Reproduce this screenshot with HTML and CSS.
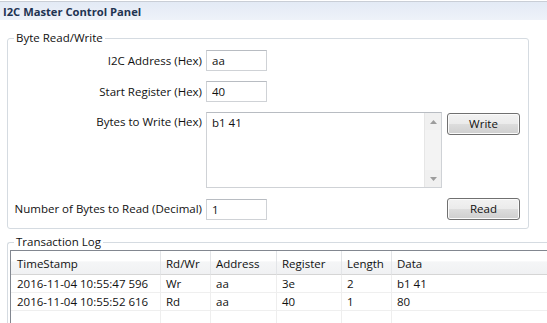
FILE: index.html
```html
<!DOCTYPE html>
<html>
<head>
<meta charset="utf-8">
<link rel="stylesheet" href="styles.css">
</head>
<body>
<div class="titlebar">I2C Master Control Panel</div>

<fieldset class="group rw">
  <legend>Byte Read/Write</legend>
  <div class="form">
    <label class="lbl">I2C Address (Hex)</label>
    <div class="field"><input class="input" type="text" value="aa"></div>
    <div></div>

    <label class="lbl">Start Register (Hex)</label>
    <div class="field"><input class="input" type="text" value="40"></div>
    <div></div>

    <label class="lbl lbl-top">Bytes to Write (Hex)</label>
    <div class="field">
      <div class="textbox">
        <div class="textbox-text">b1 41</div>
        <div class="vscroll">
          <div class="vbtn"><svg width="7" height="4" viewBox="0 0 7 4"><path d="M0 4 L3.5 0 L7 4 Z" fill="#9c9c9c"/></svg></div>
          <div class="vtrack"></div>
          <div class="vbtn"><svg width="7" height="4" viewBox="0 0 7 4"><path d="M0 0 L3.5 4 L7 0 Z" fill="#9c9c9c"/></svg></div>
        </div>
      </div>
    </div>
    <button class="btn btn-top">Write</button>

    <label class="lbl">Number of Bytes to Read (Decimal)</label>
    <div class="field"><input class="input" type="text" value="1"></div>
    <button class="btn">Read</button>
  </div>
</fieldset>

<fieldset class="group log">
  <legend>Transaction Log</legend>
  <table class="grid">
    <colgroup>
      <col class="c1"><col class="c2"><col class="c3"><col class="c4"><col class="c5"><col class="c6">
    </colgroup>
    <thead>
      <tr><th>TimeStamp</th><th>Rd/Wr</th><th>Address</th><th>Register</th><th>Length</th><th>Data</th></tr>
    </thead>
    <tbody>
      <tr><td>2016-11-04 10:55:47 596</td><td>Wr</td><td>aa</td><td>3e</td><td>2</td><td>b1 41</td></tr>
      <tr><td>2016-11-04 10:55:52 616</td><td>Rd</td><td>aa</td><td>40</td><td>1</td><td>80</td></tr>
      <tr><td></td><td></td><td></td><td></td><td></td><td></td></tr>
    </tbody>
  </table>
</fieldset>
</body>
</html>
```
FILE: styles.css
```css
html, body {
  margin: 0;
  padding: 0;
}
body {
  width: 547px;
  height: 323px;
  overflow: hidden;
  background: #ffffff;
  font-family: "Open Sans", "Noto Sans", sans-serif;
  font-size: 11.5px;
  color: #111111;
}

.titlebar {
  margin-top: 1px;
  border-top: 1px solid #c9ced6;
  height: 18px;
  line-height: 19px;
  padding-left: 3px;
  background: linear-gradient(to bottom, #e3eaf5 0%, #eef2f9 100%);
  font-weight: bold;
  font-size: 11.2px;
  color: #1f3452;
}

.group {
  margin: 0 0 0 7px;
  padding: 0;
  border: 1px solid #d5dbe1;
  border-radius: 3px;
  min-width: 0;
  box-sizing: border-box;
}
.group legend {
  margin-left: 6px;
  padding: 0 2px;
  line-height: 16px;
  color: #111111;
}

.rw {
  margin-top: 10px;
  width: 522px;
}

.form {
  display: grid;
  grid-template-columns: 198px 241px 73px;
  row-gap: 10px;
  align-items: center;
  padding: 4px 0 8px;
}

.lbl {
  text-align: right;
  padding-right: 4px;
  line-height: 16px;
  white-space: nowrap;
}
.lbl-top {
  align-self: start;
  padding-top: 2px;
}

.field {
  display: flex;
}

.input {
  box-sizing: border-box;
  width: 61px;
  height: 21px;
  margin: 0;
  padding: 0 5px;
  border: 1px solid #cfd2d6;
  border-top-color: #b8bcc2;
  font-family: inherit;
  font-size: 11.5px;
  color: #111111;
  background: #fff;
  outline: none;
}

.textbox {
  box-sizing: border-box;
  width: 236px;
  height: 76px;
  border: 1px solid #cfd2d6;
  border-top-color: #b8bcc2;
  display: flex;
}
.textbox-text {
  flex: 1;
  padding: 2px 5px 0;
  line-height: 16px;
}
.vscroll {
  width: 17px;
  display: flex;
  flex-direction: column;
  background: #f0f0f0;
  border-left: 1px solid #e6e6e6;
  box-sizing: border-box;
}
.vbtn {
  height: 17px;
  display: flex;
  align-items: center;
  justify-content: center;
}
.vtrack {
  flex: 1;
  background: #f3f3f3;
}

.btn {
  box-sizing: border-box;
  width: 73px;
  height: 22px;
  margin: 0;
  padding: 0;
  border: 1px solid #707070;
  border-radius: 3px;
  box-shadow: inset 0 0 0 1px #fbfbfb;
  background: linear-gradient(to bottom, #f2f2f2 0%, #ebebeb 50%, #dddddd 51%, #cfcfcf 100%);
  font-family: inherit;
  font-size: 11.5px;
  color: #111111;
  line-height: 18px;
}
.btn-top {
  align-self: start;
  margin-top: 1px;
}

.log {
  margin-top: 5px;
  width: 540px;
  padding-left: 2px;
  border-right: none;
  border-radius: 3px 0 0 3px;
}
.log legend {
  margin-left: 4px;
}

.grid {
  border: 1px solid #828790;
  border-right: none;
  border-spacing: 0;
  border-collapse: separate;
  table-layout: fixed;
  width: 100%;
}
.grid .c1 { width: 150px; }
.grid .c2 { width: 50px; }
.grid .c3 { width: 66px; }
.grid .c4 { width: 65px; }
.grid .c5 { width: 50px; }
.grid th,
.grid td {
  text-align: left;
  font-weight: normal;
  white-space: nowrap;
  overflow: hidden;
  line-height: 16px;
  padding: 0 0 0 5px;
}
.grid th {
  height: 24px;
  box-sizing: border-box;
  padding-top: 2px;
  border-right: 1px solid #e3e5e8;
  border-bottom: 1px solid #d5d5d5;
  background: linear-gradient(to bottom, #ffffff 0%, #ffffff 45%, #f5f6f7 46%, #f0f1f3 100%);
}
.grid th:first-child,
.grid td:first-child {
  padding-left: 6px;
}
.grid th:last-child,
.grid td:last-child {
  border-right: none;
}
.grid td {
  height: 18px;
  box-sizing: border-box;
  padding-top: 1px;
  border-right: 1px solid #eeeeee;
  border-bottom: 1px solid #efefef;
}
.grid td, .grid th { vertical-align: middle; }
```
